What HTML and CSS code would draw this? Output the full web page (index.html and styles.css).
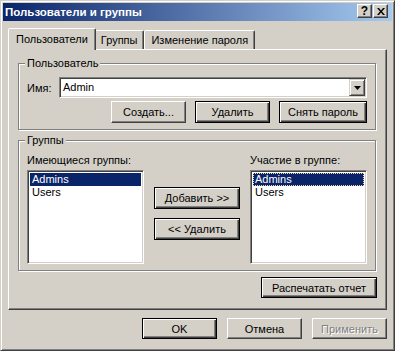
FILE: index.html
```html
<!DOCTYPE html>
<html lang="ru">
<head>
    <meta charset="UTF-8">
    <meta name="viewport" content="width=device-width, initial-scale=1.0">
    <title>Пользователи и группы</title>
    <link rel="stylesheet" href="styles.css">
</head>
<body>

    <div class="window">
        <!-- Title bar -->
        <div class="titlebar">
            <span class="title">Пользователи и группы</span>
            <div class="caption-buttons">
                <button class="caption-btn help">?</button>
                <button class="caption-btn close">
                    <svg width="8" height="7" viewBox="0 0 8 7">
                        <path d="M0 0 L2 0 L4 2.5 L6 0 L8 0 L5 3.5 L8 7 L6 7 L4 4.5 L2 7 L0 7 L3 3.5 Z" fill="#000"/>
                    </svg>
                </button>
            </div>
        </div>

        <!-- Tabs -->
        <div class="tabs">
            <div class="tab active">Пользователи</div>
            <div class="tab">Группы</div>
            <div class="tab">Изменение пароля</div>
        </div>

        <div class="tab-panel">
            <fieldset class="group">
                <legend>Пользователь</legend>
                <div class="name-row">
                    <label>Имя:</label>
                    <div class="combo">
                        <span class="combo-value">Admin</span>
                        <span class="combo-arrow">
                            <svg width="7" height="4" viewBox="0 0 7 4"><path d="M0 0 H7 L3.5 4 Z" fill="#000"/></svg>
                        </span>
                    </div>
                </div>
                <div class="button-row">
                    <button class="btn">Создать...</button>
                    <button class="btn framed">Удалить</button>
                    <button class="btn framed wide">Снять пароль</button>
                </div>
            </fieldset>

            <fieldset class="group groups">
                <legend>Группы</legend>
                <div class="groups-grid">
                    <div class="list-label">Имеющиеся группы:</div>
                    <div></div>
                    <div class="list-label">Участие в группе:</div>

                    <ul class="listbox">
                        <li class="selected">Admins</li>
                        <li>Users</li>
                    </ul>

                    <div class="move-buttons">
                        <button class="btn framed">Добавить &gt;&gt;</button>
                        <button class="btn framed">&lt;&lt; Удалить</button>
                    </div>

                    <ul class="listbox">
                        <li class="selected focused">Admins</li>
                        <li>Users</li>
                    </ul>
                </div>
            </fieldset>

            <div class="report-row">
                <button class="btn framed report">Распечатать отчет</button>
            </div>
        </div>

        <!-- Dialog buttons -->
        <div class="dialog-buttons">
            <button class="btn framed">OK</button>
            <button class="btn">Отмена</button>
            <button class="btn disabled">Применить</button>
        </div>
    </div>

</body>
</html>
```

FILE: styles.css
```css
/* Basic Reset */
* {
    margin: 0;
    padding: 0;
    box-sizing: border-box;
}

body {
    font-family: 'Liberation Sans', Arial, sans-serif;
    font-size: 11px;
    color: #000;
    background-color: #d4d0c8;
}

/* Outer window frame (classic 3D) */
.window {
    width: 395px;
    height: 351px;
    padding: 2px;
    background-color: #d4d0c8;
    border: 1px solid;
    border-color: #d4d0c8 #404040 #404040 #d4d0c8;
    box-shadow: inset 1px 1px #fff, inset -1px -1px #808080;
}

.titlebar {
    height: 18px;
    display: flex;
    justify-content: space-between;
    padding: 1px 4px 0 2px;
    background: linear-gradient(to right, #0a246a, #a6caf0);
}

.title {
    color: #fff;
    font-size: 11.5px;
    font-weight: bold;
    line-height: 17px;
}

.caption-buttons {
    display: flex;
    gap: 1px;
}

.caption-btn {
    width: 15px;
    height: 14px;
    display: flex;
    align-items: center;
    justify-content: center;
    background-color: #d4d0c8;
    border: 1px solid;
    border-color: #fff #404040 #404040 #fff;
    box-shadow: inset -1px -1px #808080;
    font-family: 'Liberation Sans', Arial, sans-serif;
    font-size: 12px;
    font-weight: bold;
    line-height: 12px;
    color: #000;
}

/* Tabs */
.tabs {
    height: 21px;
    margin: 7px 5px 0;
    padding-left: 2px;
    display: flex;
    align-items: flex-end;
}

.tab {
    height: 19px;
    padding: 1px 6px 0;
    line-height: 17px;
    border: 1px solid;
    border-bottom: none;
    border-color: #fff #404040 transparent #fff;
    border-radius: 2px 2px 0 0;
    box-shadow: inset -1px 0 #808080;
    background-color: #d4d0c8;
}

.tab.active {
    position: relative;
    z-index: 1;
    height: 22px;
    margin: 0 -2px -1px;
    padding: 1px 7px 0;
    line-height: 18px;
}

.tab-panel {
    height: 261px;
    margin: 0 5px;
    padding: 7px 10px 0 9px;
    border: 1px solid;
    border-color: #fff #404040 #404040 #fff;
    box-shadow: inset -1px -1px #808080;
}

/* Etched group boxes */
.group {
    min-width: 0;
    padding: 7px 8px 6px;
    border: 1px solid #808080;
    box-shadow: inset 1px 1px #fff, 1px 1px #fff;
}

.group legend {
    margin-left: -2px;
    padding: 0 2px;
    line-height: 13px;
    background-color: #d4d0c8;
}

.groups {
    margin-top: 4px;
}

.name-row {
    display: grid;
    grid-template-columns: 32px 1fr;
    align-items: center;
}

.combo {
    height: 21px;
    padding: 1px;
    display: flex;
    align-items: stretch;
    background-color: #fff;
    border: 1px solid;
    border-color: #808080 #fff #fff #808080;
    box-shadow: inset 1px 1px #404040, inset -1px -1px #d4d0c8;
}

.combo-value {
    flex: 1;
    padding-left: 2px;
    line-height: 17px;
}

.combo-arrow {
    width: 16px;
    display: flex;
    align-items: center;
    justify-content: center;
    background-color: #d4d0c8;
    border: 1px solid;
    border-color: #d4d0c8 #404040 #404040 #d4d0c8;
    box-shadow: inset 1px 1px #fff, inset -1px -1px #808080;
}

.button-row {
    margin-top: 3px;
    display: flex;
    justify-content: flex-end;
    gap: 9px;
}

/* Push buttons */
.btn {
    width: 75px;
    height: 22px;
    font-family: inherit;
    font-size: inherit;
    color: #000;
    background-color: #d4d0c8;
    border: 1px solid;
    border-color: #fff #404040 #404040 #fff;
    box-shadow: inset -1px -1px #808080;
}

.btn.framed {
    border-color: #000;
    box-shadow: inset 1px 1px #fff, inset -1px -1px #404040, inset -2px -2px #808080;
}

.btn.wide {
    width: 88px;
}

.btn.disabled {
    color: #808080;
    text-shadow: 1px 1px #fff;
}

/* Group lists */
.groups-grid {
    display: grid;
    grid-template-columns: 117px 1fr 117px;
    column-gap: 10px;
}

.list-label {
    line-height: 13px;
    margin-bottom: 3px;
    white-space: nowrap;
}

.listbox {
    height: 94px;
    padding: 2px;
    list-style: none;
    background-color: #fff;
    border: 1px solid;
    border-color: #808080 #fff #fff #808080;
    box-shadow: inset 1px 1px #404040, inset -1px -1px #d4d0c8;
}

.listbox li {
    height: 13px;
    line-height: 13px;
    padding-left: 2px;
}

.listbox li.selected {
    background-color: #0a246a;
    color: #fff;
}

.listbox li.focused {
    outline: 1px dotted #f5db95;
    outline-offset: -1px;
}

.move-buttons {
    margin-top: 17px;
    display: flex;
    flex-direction: column;
    gap: 9px;
}

.move-buttons .btn {
    width: 100%;
}

.report-row {
    margin-top: 6px;
    display: flex;
    justify-content: flex-end;
}

.btn.report {
    width: 116px;
    height: 21px;
    margin-right: -1px;
}

.dialog-buttons {
    margin: 8px 5px 0;
    display: flex;
    justify-content: flex-end;
    gap: 10px;
}

.dialog-buttons .btn {
    height: 21px;
}
```
